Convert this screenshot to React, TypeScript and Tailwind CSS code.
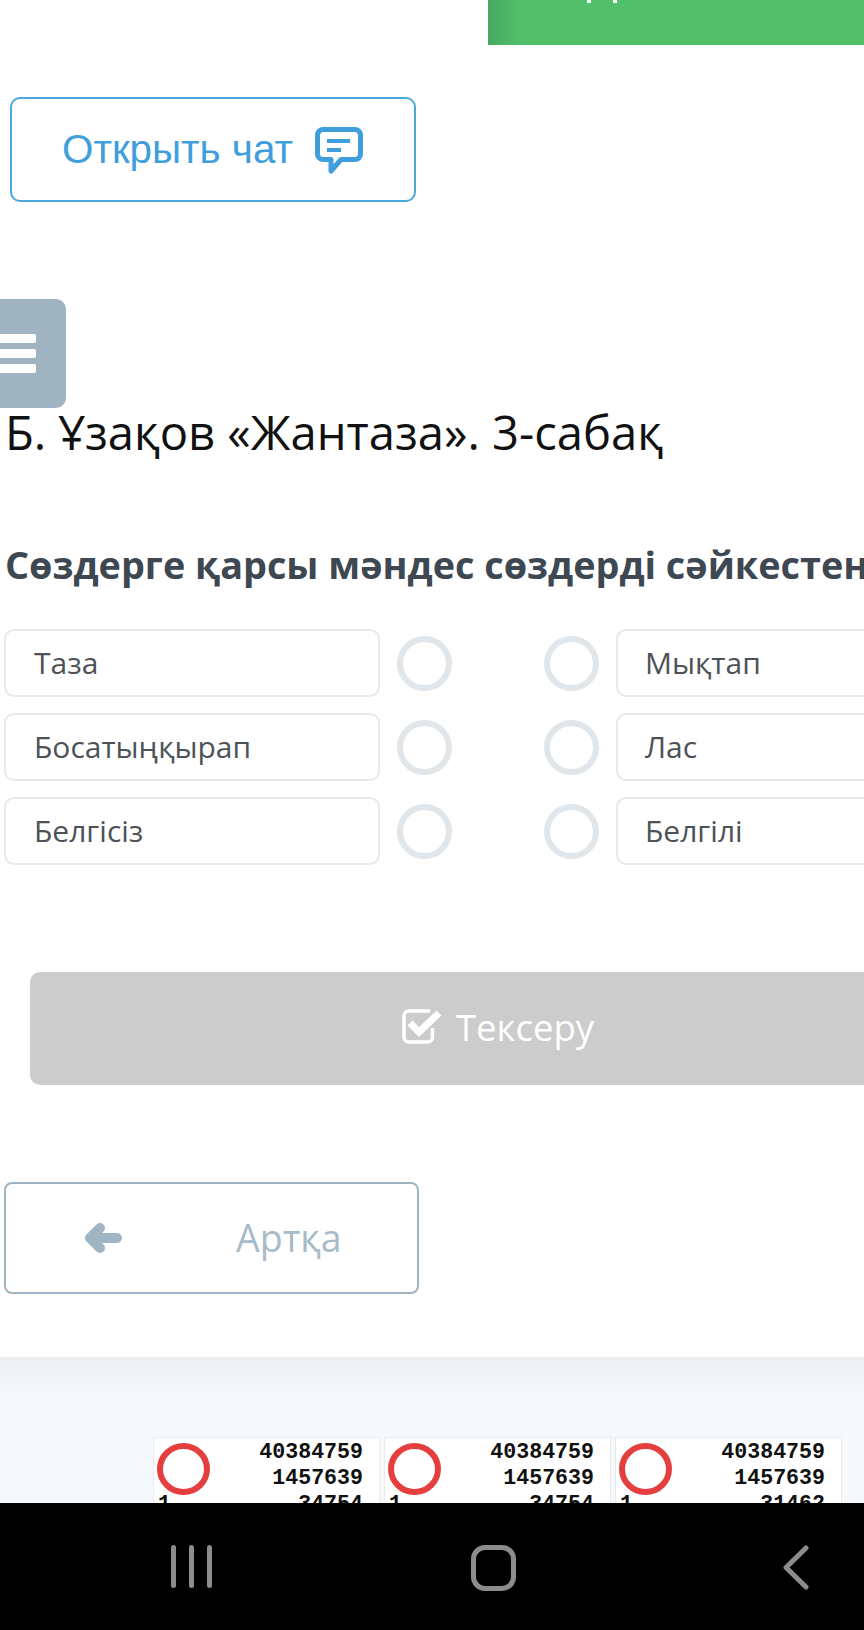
const sans = 'font-["Open_Sans",sans-serif]'

const leftItems = ['Таза', 'Босатыңқырап', 'Белгісіз']
const rightItems = ['Мықтап', 'Лас', 'Белгілі']
const lastNumbers = ['34754', '34754', '31462']

const ChatIcon = () => (
  <svg width="48" height="48" viewBox="0 0 48 48" fill="none">
    <path d="M8 2.500h32a5.500 5.500 0 0 1 5.500 5.500v19a5.500 5.500 0 0 1-5.500 5.500H26L16 44V32.500H8A5.500 5.500 0 0 1 2.500 27V8A5.500 5.500 0 0 1 8 2.500z" stroke="#3f9fdc" strokeWidth="5" strokeLinejoin="round" />
    <path d="M12 14h23M12 23h14" stroke="#3f9fdc" strokeWidth="4" />
  </svg>
)

const CheckIcon = () => (
  <svg width="40" height="36" viewBox="0 0 40 36" fill="none">
    <path d="M30.500 20v9a5 5 0 0 1-5 5H7a5 5 0 0 1-5-5V8a5 5 0 0 1 5-5h21" stroke="#fff" strokeWidth="3.500" />
    <path d="M8 15l9 9L37 5" stroke="#fff" strokeWidth="7" />
  </svg>
)

const ArrowIcon = () => (
  <svg width="38" height="32" viewBox="0 0 38 32" fill="none">
    <path d="M33 16H6M16 6L6 16l10 10" stroke="#a0b5c4" strokeWidth="10" strokeLinecap="round" strokeLinejoin="round" />
  </svg>
)

const Circle = () => <div className="h-[55px] w-[55px] shrink-0 rounded-full border-[6px] border-[#e1e6ea]" />

const OptionBox = ({ label, className }: { label: string; className: string }) => (
  <div className={`flex h-[68px] shrink-0 items-center rounded-[10px] border-2 border-[#e6e9ec] pb-[2px] text-[30px] text-[#4d5257] ${className}`}>
    {label}
  </div>
)

const NumberCard = ({ last }: { last: string }) => (
  <div className="relative h-[70px] w-[227px] border border-b-0 border-[#e8ecef] bg-white font-['Liberation_Mono',monospace] text-[21.6px] font-bold leading-[26px] text-[#111]">
    <svg className="absolute left-[3px] top-[5px]" width="53" height="52" viewBox="0 0 53 52" fill="none">
      <ellipse cx="26.500" cy="26" rx="23.500" ry="23" stroke="#e53e3e" strokeWidth="6" />
    </svg>
    <div className="pr-[16px] pt-[1px] text-right">
      <div>40384759</div>
      <div>1457639</div>
      <div className="flex justify-between pl-[4px]">
        <span>1</span>
        <span>{last}</span>
      </div>
    </div>
  </div>
)

const App = () => {
  return (
    <div className={`flex h-[1630px] w-[864px] flex-col overflow-hidden bg-white ${sans}`}>
      <div className="flex h-[45px] shrink-0 justify-end">
        <div className="flex w-[376px] items-start bg-gradient-to-r from-[#46a95f] from-0% to-[#52c06b] to-[9%] pl-[99px]">
          {/* bottoms of the letters cut off by the top of the screen */}
          <div className="h-[3px] w-[4px] bg-white" />
          <div className="ml-[22px] h-[3px] w-[4px] bg-white" />
        </div>
      </div>

      <button className="ml-[10px] mt-[52px] flex h-[105px] w-[406px] shrink-0 items-center rounded-[10px] border-2 border-[#4aa8dc] pl-[50px] font-['Liberation_Sans',sans-serif] text-[40.4px] text-[#3f9fdc]">
        <span>Открыть чат</span>
        <span className="ml-[22px] mt-[3px]"><ChatIcon /></span>
      </button>

      <div className="mt-[97px] flex h-[109px] w-[66px] shrink-0 flex-col justify-center gap-[6px] rounded-r-[10px] bg-[#a0b3c1] pr-[30px]">
        <div className="h-[9px] rounded-r-[2px] bg-white" />
        <div className="h-[9px] rounded-r-[2px] bg-white" />
        <div className="h-[9px] rounded-r-[2px] bg-white" />
      </div>

      <h1 className="-mt-[1px] ml-[5px] h-[66px] shrink-0 whitespace-nowrap text-[47.2px] leading-[50px] text-[#111]">Б. Ұзақов «Жантаза». 3-сабақ</h1>

      <h2 className="ml-[5px] mt-[65px] h-[54px] shrink-0 whitespace-nowrap text-[37.8px] font-bold leading-[54px] text-[#3d4852]">
        Сөздерге қарсы мәндес сөздерді сәйкестендіріңіз
      </h2>

      <div className="mt-[36px] flex shrink-0 flex-col gap-[16px] pl-[4px] pt-[1px]">
        {leftItems.map((item, i) => (
          <div key={item} className="flex w-[1000px] items-center">
            <OptionBox label={item} className="w-[376px] pl-[28px]" />
            <div className="ml-[17px]"><Circle /></div>
            <div className="ml-[92px]"><Circle /></div>
            <OptionBox label={rightItems[i]} className="ml-[17px] w-[400px] pl-[27px]" />
          </div>
        ))}
      </div>

      <button className="ml-[30px] mt-[107px] flex h-[113px] w-[900px] shrink-0 items-center rounded-[10px] bg-[#cccccc] pl-[372px] text-[36.5px] text-white">
        <span className="mb-[6px]"><CheckIcon /></span>
        <span className="mb-[3px] ml-[14px]">Тексеру</span>
      </button>

      <button className="ml-[4px] mt-[97px] flex h-[112px] w-[415px] shrink-0 items-center rounded-[8px] border-2 border-[#a0b3c1] pl-[78px] text-[37.5px] text-[#a8bbc8]">
        <ArrowIcon />
        <span className="ml-[114px]">Артқа</span>
      </button>

      <div className="mt-[63px] flex min-h-0 flex-1 flex-col overflow-hidden bg-gradient-to-b from-[#eceff1] from-0% to-[#f6f9fc] to-[25%] pl-[153px] pt-[80px]">
        <div className="flex gap-[4px]">
          {lastNumbers.map((last, i) => (
            <NumberCard key={i} last={last} />
          ))}
        </div>
      </div>

      <div className="relative flex h-[127px] shrink-0 items-start bg-black pt-[42px]">
        <div className="ml-[171px] flex gap-[13px]">
          <div className="h-[43px] w-[5px] rounded-full bg-[#8c8c8c]" />
          <div className="h-[43px] w-[5px] rounded-full bg-[#8c8c8c]" />
          <div className="h-[43px] w-[5px] rounded-full bg-[#8c8c8c]" />
        </div>
        <div className="ml-[259px] h-[46px] w-[45px] rounded-[14px] border-[5px] border-[#8c8c8c]" />
        <svg className="ml-[267px]" width="26" height="45" viewBox="0 0 26 45" fill="none">
          <path d="M23 3L3 22.500 23 42" stroke="#8c8c8c" strokeWidth="5" strokeLinecap="round" strokeLinejoin="round" />
        </svg>
      </div>
    </div>
  )
}

export default App
